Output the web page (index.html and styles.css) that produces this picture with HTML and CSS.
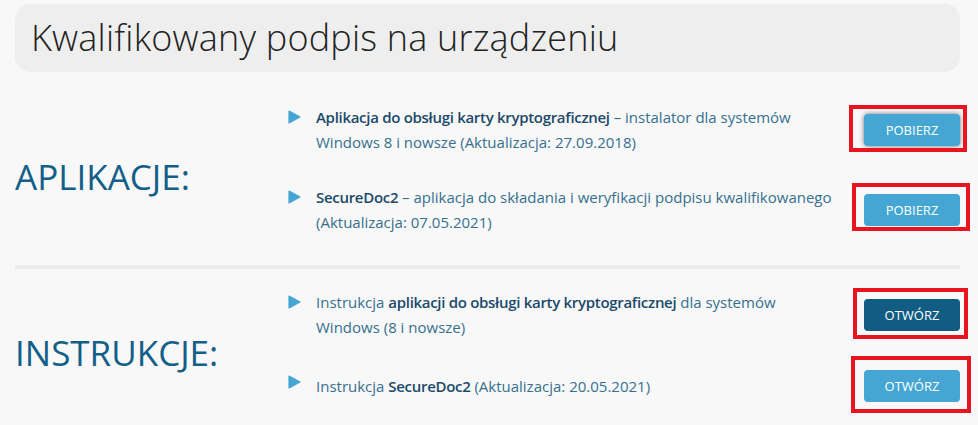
FILE: index.html
```html
<!DOCTYPE html>
<html lang="pl">
<head>
<meta charset="utf-8">
<title>Kwalifikowany podpis na urządzeniu</title>
<link rel="stylesheet" href="styles.css">
</head>
<body>
<div class="page">
  <header class="title-bar"><h1>Kwalifikowany podpis na urządzeniu</h1></header>

  <section class="group group-apps">
    <h2 class="group-label">APLIKACJE:</h2>
    <ul class="items">
      <li class="item">
        <svg class="bullet" viewBox="0 0 13 14"><polygon points="1,1 12,7 1,13" /></svg>
        <p class="desc"><strong>Aplikacja do obsługi karty kryptograficznej</strong> – instalator dla systemów Windows 8 i nowsze (Aktualizacja: 27.09.2018)</p>
        <span class="mark mark-1"><a class="btn btn-hover" href="#">POBIERZ</a></span>
      </li>
      <li class="item">
        <svg class="bullet" viewBox="0 0 13 14"><polygon points="1,1 12,7 1,13" /></svg>
        <p class="desc"><strong>SecureDoc2</strong> – aplikacja do składania i weryfikacji podpisu kwalifikowanego (Aktualizacja: 07.05.2021)</p>
        <span class="mark mark-2"><a class="btn" href="#">POBIERZ</a></span>
      </li>
    </ul>
  </section>

  <section class="group group-docs">
    <h2 class="group-label">INSTRUKCJE:</h2>
    <ul class="items">
      <li class="item">
        <svg class="bullet" viewBox="0 0 13 14"><polygon points="1,1 12,7 1,13" /></svg>
        <p class="desc">Instrukcja <strong>aplikacji do obsługi karty kryptograficznej</strong> dla systemów Windows (8 i nowsze)</p>
        <span class="mark mark-3"><a class="btn btn-dark" href="#">OTWÓRZ</a></span>
      </li>
      <li class="item">
        <svg class="bullet" viewBox="0 0 13 14"><polygon points="1,1 12,7 1,13" /></svg>
        <p class="desc">Instrukcja <strong>SecureDoc2</strong> (Aktualizacja: 20.05.2021)</p>
        <span class="mark mark-4"><a class="btn" href="#">OTWÓRZ</a></span>
      </li>
    </ul>
  </section>
</div>
</body>
</html>
```
FILE: styles.css
```css
* { box-sizing: border-box; }

html, body {
  background: #f8f8f8;
}

body {
  margin: 0;
  font-family: "Open Sans", "Liberation Sans", sans-serif;
}

.page {
  padding: 4px 18px 30px 15px;
}

.title-bar {
  height: 68px;
  background: #eeeeee;
  border-radius: 15px;
  display: flex;
  align-items: center;
  padding-left: 16px;
}

.title-bar h1 {
  margin: 0;
  font-size: 36px;
  font-weight: 300;
  line-height: 1;
  letter-spacing: 0.2px;
  color: #222222;
}

.group {
  display: flex;
}

.group-apps {
  margin-top: 33px;
  padding-bottom: 30px;
}

.group-docs {
  border-top: 4px solid #ececec;
  padding-top: 21px;
}

.group-label {
  flex: none;
  width: 273px;
  margin: 0;
  padding-top: 14px;
  align-self: center;
  font-size: 35px;
  font-weight: 500;
  line-height: 1.2;
  color: #135f88;
}

.items {
  list-style: none;
  margin: 0;
  padding: 0;
  flex: 1;
  display: flex;
  flex-direction: column;
  gap: 30px;
}

.item {
  display: flex;
  align-items: center;
}

.bullet {
  flex: none;
  width: 13px;
  height: 14px;
  margin-right: 15px;
  margin-top: 5px;
  align-self: flex-start;
  fill: #45a5d4;
  stroke: #45a5d4;
  stroke-width: 1.2;
  stroke-linejoin: round;
}

.desc {
  margin: 0;
  width: 521px;
  font-size: 15px;
  line-height: 25px;
  color: #36708f;
}

.desc strong {
  font-weight: 600;
  letter-spacing: -0.3px;
  color: #1b4a6b;
}

.mark {
  position: relative;
  margin-left: auto;
}

.mark::after {
  content: "";
  position: absolute;
  border: 4px solid #e8141f;
  pointer-events: none;
}

.mark-1::after { top: -9px; bottom: -6px; left: -15px; right: -7px; }
.mark-2::after { top: -11px; bottom: -5px; left: -12px; right: -10px; }
.mark-3::after { top: -11px; bottom: -8px; left: -11px; right: -8px; }
.mark-4::after { top: -14px; bottom: -11px; left: -13px; right: -11px; }

.btn {
  display: block;
  width: 96px;
  height: 32px;
  line-height: 32px;
  text-align: center;
  background: #45a6d3;
  color: #ffffff;
  font-size: 13px;
  border-radius: 4px;
  text-decoration: none;
}

.btn-dark {
  background: #115c82;
}

.btn-hover {
  box-shadow: 0 0 5px rgba(0, 0, 0, 0.55);
}
```
